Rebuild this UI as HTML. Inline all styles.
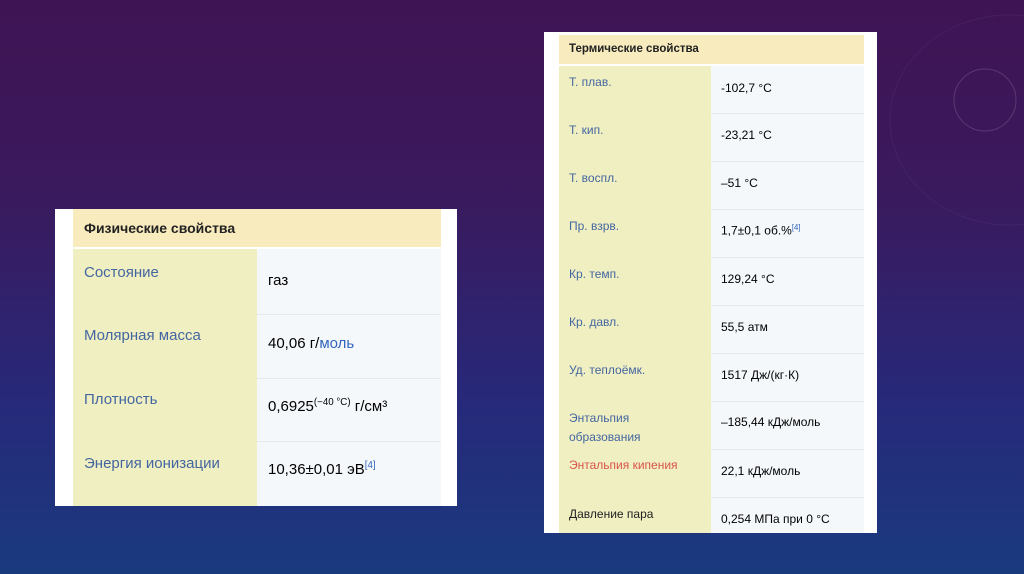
<!DOCTYPE html>
<html><head><meta charset="utf-8"><style>
*{margin:0;padding:0;box-sizing:border-box}
body{width:1024px;height:574px;overflow:hidden;position:relative;font-family:"Liberation Sans",sans-serif;
background:linear-gradient(180deg,#3f1454 0%,#3a1a5e 35%,#27297a 70%,#1a3a7e 100%);}
.box{position:absolute;background:#fff}
.cell{position:absolute;overflow:visible;white-space:nowrap}
.h{background:#f8ebbd;font-weight:bold;color:#222}
.l{background:#f0efc2;color:#4466a0}
.r{background:#f5f8fb;color:#222}
sup{font-size:0.65em;vertical-align:0.6em}
.lk{color:#3366bb}
</style></head><body>
<svg style="position:absolute;left:0;top:0" width="1024" height="574">
<circle cx="985" cy="100" r="31" fill="none" stroke="#7a5a8a" stroke-width="1" opacity=".5"/>
<ellipse cx="1010" cy="120" rx="120" ry="105" fill="none" stroke="#6a4a8a" stroke-width="1" opacity=".2"/>
</svg>

<div class="box" style="left:55px;top:209px;width:402px;height:297px">
 <div class="cell h" style="left:18px;top:0;width:368px;height:38px;font-size:14px;padding:11px 0 0 11px">Физические свойства</div>
 <div class="cell l" style="left:18px;top:40px;width:184px;height:257px"></div>
 <div class="cell r" style="left:202px;top:40px;width:184px;height:257px"></div>
 <div class="cell" style="left:29px;top:55px;font-size:15px;color:#4466a0">Состояние</div>
 <div class="cell" style="left:213px;top:63px;font-size:15px">газ</div>
 <div class="cell" style="left:202px;top:105px;width:184px;height:1px;background:#e6eaf0"></div>
 <div class="cell" style="left:29px;top:118px;font-size:15px;color:#4466a0">Молярная масса</div>
 <div class="cell" style="left:213px;top:126px;font-size:15px">40,06 г/<span class="lk">моль</span></div>
 <div class="cell" style="left:202px;top:169px;width:184px;height:1px;background:#e6eaf0"></div>
 <div class="cell" style="left:29px;top:182px;font-size:15px;color:#4466a0">Плотность</div>
 <div class="cell" style="left:213px;top:188px;font-size:15px">0,6925<sup>(−40 °C)</sup> г/см³</div>
 <div class="cell" style="left:202px;top:232px;width:184px;height:1px;background:#e6eaf0"></div>
 <div class="cell" style="left:29px;top:246px;font-size:15px;color:#4466a0">Энергия ионизации</div>
 <div class="cell" style="left:213px;top:251px;font-size:15px">10,36±0,01 эВ<sup class="lk">[4]</sup></div>
</div>

<div class="box" style="left:544px;top:32px;width:333px;height:501px">
 <div class="cell h" style="left:15px;top:3px;width:305px;height:29px;font-size:11.5px;padding:8px 0 0 10px">Термические свойства</div>
 <div class="cell l" style="left:15px;top:34px;width:152px;height:467px"></div>
 <div class="cell r" style="left:167px;top:34px;width:153px;height:467px"></div>
</div>
<div style="position:absolute;left:0;top:0;font-size:12px;white-space:nowrap">
 <div class="cell" style="left:569px;top:75px;color:#4466a0">Т. плав.</div><div class="cell" style="left:721px;top:81px">-102,7 °C</div>
 <div class="cell" style="left:711px;top:113px;width:153px;height:1px;background:#e6eaf0"></div>
 <div class="cell" style="left:569px;top:123px;color:#4466a0">Т. кип.</div><div class="cell" style="left:721px;top:128px">-23,21 °C</div>
 <div class="cell" style="left:711px;top:161px;width:153px;height:1px;background:#e6eaf0"></div>
 <div class="cell" style="left:569px;top:171px;color:#4466a0">Т. воспл.</div><div class="cell" style="left:721px;top:176px">–51 °C</div>
 <div class="cell" style="left:711px;top:209px;width:153px;height:1px;background:#e6eaf0"></div>
 <div class="cell" style="left:569px;top:219px;color:#4466a0">Пр. взрв.</div><div class="cell" style="left:721px;top:223px">1,7±0,1 об.%<sup class="lk">[4]</sup></div>
 <div class="cell" style="left:711px;top:257px;width:153px;height:1px;background:#e6eaf0"></div>
 <div class="cell" style="left:569px;top:267px;color:#4466a0">Кр. темп.</div><div class="cell" style="left:721px;top:272px">129,24 °C</div>
 <div class="cell" style="left:711px;top:305px;width:153px;height:1px;background:#e6eaf0"></div>
 <div class="cell" style="left:569px;top:315px;color:#4466a0">Кр. давл.</div><div class="cell" style="left:721px;top:320px">55,5 атм</div>
 <div class="cell" style="left:711px;top:353px;width:153px;height:1px;background:#e6eaf0"></div>
 <div class="cell" style="left:569px;top:363px;color:#4466a0">Уд. теплоёмк.</div><div class="cell" style="left:721px;top:368px">1517 Дж/(кг·К)</div>
 <div class="cell" style="left:711px;top:401px;width:153px;height:1px;background:#e6eaf0"></div>
 <div class="cell" style="left:569px;top:409px;color:#4466a0;line-height:19px">Энтальпия<br>образования</div><div class="cell" style="left:721px;top:415px">–185,44 кДж/моль</div>
 <div class="cell" style="left:711px;top:449px;width:153px;height:1px;background:#e6eaf0"></div>
 <div class="cell" style="left:569px;top:458px;color:#d9534a">Энтальпия кипения</div><div class="cell" style="left:721px;top:464px">22,1 кДж/моль</div>
 <div class="cell" style="left:711px;top:497px;width:153px;height:1px;background:#e6eaf0"></div>
 <div class="cell" style="left:569px;top:507px;color:#222">Давление пара</div><div class="cell" style="left:721px;top:512px">0,254 МПа при 0 °C</div>
</div>
</body></html>
